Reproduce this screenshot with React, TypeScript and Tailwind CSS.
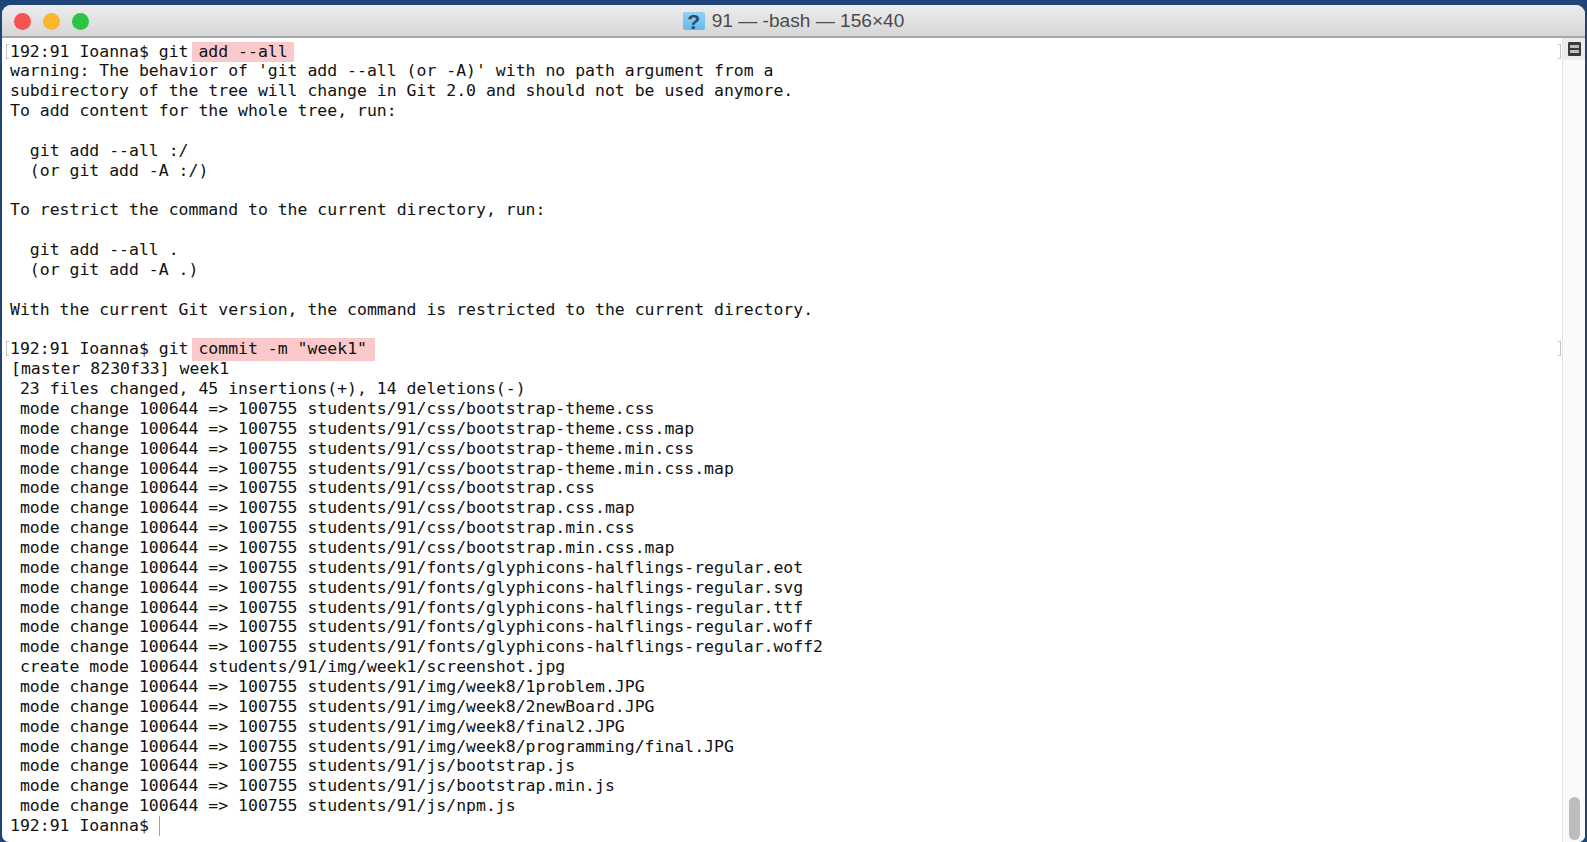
const output = [
  "warning: The behavior of 'git add --all (or -A)' with no path argument from a",
  'subdirectory of the tree will change in Git 2.0 and should not be used anymore.',
  'To add content for the whole tree, run:',
  '',
  '  git add --all :/',
  '  (or git add -A :/)',
  '',
  'To restrict the command to the current directory, run:',
  '',
  '  git add --all .',
  '  (or git add -A .)',
  '',
  'With the current Git version, the command is restricted to the current directory.',
  '',
]

const changes = [
  ' mode change 100644 => 100755 students/91/css/bootstrap-theme.css',
  ' mode change 100644 => 100755 students/91/css/bootstrap-theme.css.map',
  ' mode change 100644 => 100755 students/91/css/bootstrap-theme.min.css',
  ' mode change 100644 => 100755 students/91/css/bootstrap-theme.min.css.map',
  ' mode change 100644 => 100755 students/91/css/bootstrap.css',
  ' mode change 100644 => 100755 students/91/css/bootstrap.css.map',
  ' mode change 100644 => 100755 students/91/css/bootstrap.min.css',
  ' mode change 100644 => 100755 students/91/css/bootstrap.min.css.map',
  ' mode change 100644 => 100755 students/91/fonts/glyphicons-halflings-regular.eot',
  ' mode change 100644 => 100755 students/91/fonts/glyphicons-halflings-regular.svg',
  ' mode change 100644 => 100755 students/91/fonts/glyphicons-halflings-regular.ttf',
  ' mode change 100644 => 100755 students/91/fonts/glyphicons-halflings-regular.woff',
  ' mode change 100644 => 100755 students/91/fonts/glyphicons-halflings-regular.woff2',
  ' create mode 100644 students/91/img/week1/screenshot.jpg',
  ' mode change 100644 => 100755 students/91/img/week8/1problem.JPG',
  ' mode change 100644 => 100755 students/91/img/week8/2newBoard.JPG',
  ' mode change 100644 => 100755 students/91/img/week8/final2.JPG',
  ' mode change 100644 => 100755 students/91/img/week8/programming/final.JPG',
  ' mode change 100644 => 100755 students/91/js/bootstrap.js',
  ' mode change 100644 => 100755 students/91/js/bootstrap.min.js',
  ' mode change 100644 => 100755 students/91/js/npm.js',
]

function Line({ text }: { text: string }) {
  return <div className="h-[19.86px] whitespace-pre">{text}</div>
}

function Prompt({ command, mark }: { command: string; mark: string }) {
  return (
    <div className="relative h-[19.86px] whitespace-pre">
      <span className="absolute top-[2px] left-[-4px] h-[15px] w-[3px] border-y border-l border-[#c4c4c4]" />
      <span className="absolute top-[2px] right-[1px] h-[15px] w-[3px] border-y border-r border-[#c4c4c4]" />
      192:91 Ioanna$ git{' '}
      <span className={mark}>{command}</span>
    </div>
  )
}

export default function App() {
  return (
    <div className="flex h-[842px] w-[1587px] flex-col overflow-hidden bg-[#1f4478] pt-[5px] pr-[2px] pl-[2px]">
      <div className="flex min-h-0 flex-1 flex-col overflow-hidden rounded-t-[9px] rounded-b-[7px] bg-white">
        <div className="relative flex h-[33px] shrink-0 items-center justify-center border-b-2 border-[#a8a8a8] bg-gradient-to-b from-[#ededed] to-[#d6d6d6]">
          <div className="absolute top-[8px] left-[12px] flex gap-[12px]">
            <span className="h-[17px] w-[17px] rounded-full bg-[#f4544f]" />
            <span className="h-[17px] w-[17px] rounded-full bg-[#fbb62e]" />
            <span className="h-[17px] w-[17px] rounded-full bg-[#2ec443]" />
          </div>
          <div className="flex items-center gap-[7px] pt-[1px] font-['Liberation_Sans',sans-serif] text-[19.1px] leading-none text-[#4b4b4b]">
            <span className="flex h-[18px] w-[22px] items-center justify-center rounded-[2px] bg-gradient-to-b from-[#8ed2f6] to-[#68b8ea] text-[21px] leading-none font-bold text-[#2a4a68]">
              ?
            </span>
            <span>91 — -bash — 156×40</span>
          </div>
        </div>

        <div className="flex min-h-0 flex-1">
          <div className="min-w-0 flex-1 pt-[3.5px] pl-[8px] font-['DejaVu_Sans_Mono','Liberation_Mono',monospace] text-[16.48px] leading-[19.86px] text-[#111111]">
            <Prompt command="add --all" mark="relative -mx-[6px] inline-block h-[20px] bg-[#fbc9c9] px-[6px]" />
            {output.map((text, i) => (
              <Line key={i} text={text} />
            ))}
            <Prompt command={'commit -m "week1"'} mark="relative -mx-[6px] -my-[2px] inline-block h-[23px] bg-[#fbc9c9] pt-[1px] pr-[8px] pl-[6px]" />
            <div className="pl-[1px]">
              <Line text="[master 8230f33] week1" />
            </div>
            <Line text=" 23 files changed, 45 insertions(+), 14 deletions(-)" />
            {changes.map((text, i) => (
              <Line key={i} text={text} />
            ))}
            <div className="flex h-[19.86px] items-center whitespace-pre">
              192:91 Ioanna$ <span className="h-[20px] w-px bg-[#8fa8a0]" />
            </div>
          </div>

          <div className="flex w-[23px] shrink-0 flex-col items-center justify-between border-l border-[#e6e6e6] bg-[#fafafa] pb-[2px]">
            <div className="flex h-[22px] w-full items-center justify-center bg-[#ececec]">
              <svg width="13" height="14" viewBox="0 0 13 14">
                <rect width="13" height="14" rx="1" fill="#3a3a3a" />
                <rect x="2" y="3" width="9" height="3" fill="#bdbdbd" />
                <rect x="2" y="8" width="9" height="3" fill="#bdbdbd" />
              </svg>
            </div>
            <div className="h-[43px] w-[11px] rounded-full bg-[#bdbdbd]" />
          </div>
        </div>
      </div>
    </div>
  )
}
